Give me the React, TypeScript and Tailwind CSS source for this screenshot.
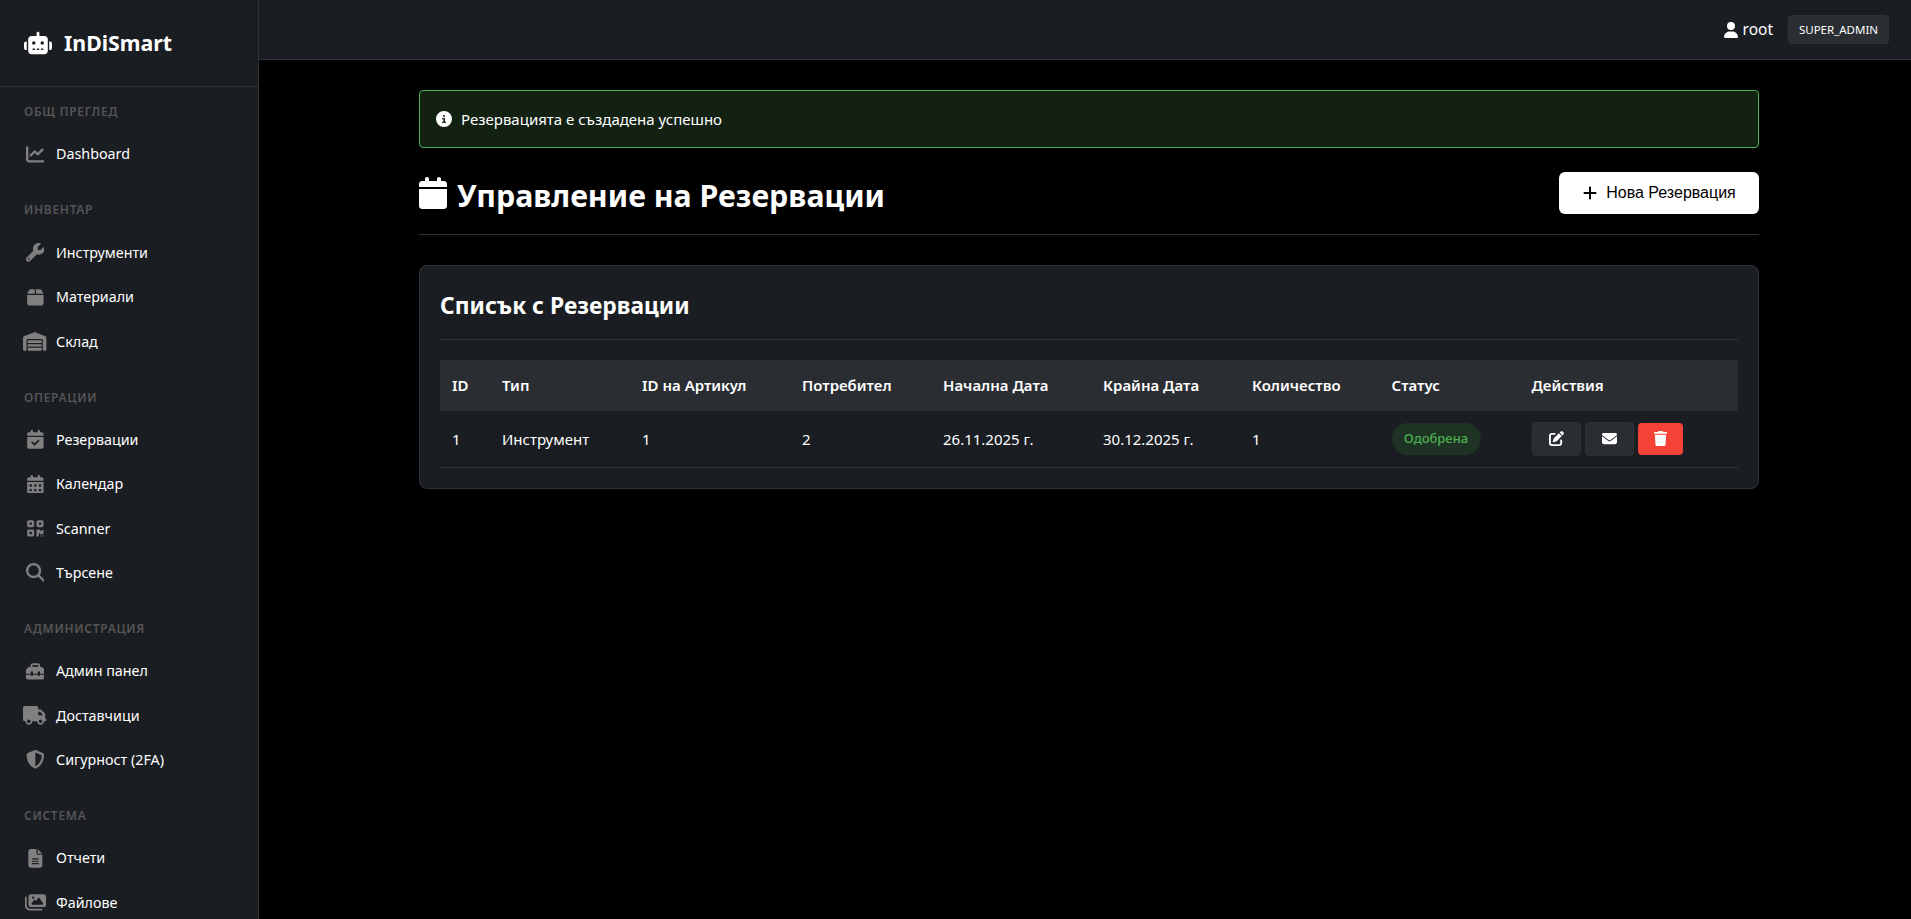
import type { IconType } from 'react-icons'
import {
  FaBox,
  FaCalendar,
  FaCalendarCheck,
  FaCalendarDays,
  FaChartLine,
  FaCircleInfo,
  FaEnvelope,
  FaFileLines,
  FaImages,
  FaMagnifyingGlass,
  FaPenToSquare,
  FaPlus,
  FaQrcode,
  FaRobot,
  FaShieldHalved,
  FaToolbox,
  FaTrash,
  FaTruck,
  FaUser,
  FaWarehouse,
  FaWrench,
} from 'react-icons/fa6'

const font = 'font-["Noto_Sans","Open_Sans",sans-serif]'

type NavItem = { label: string; icon: IconType; width?: string }

const sections: { title: string; items: NavItem[] }[] = [
  { title: 'Общ преглед', items: [{ label: 'Dashboard', icon: FaChartLine }] },
  {
    title: 'Инвентар',
    items: [
      { label: 'Инструменти', icon: FaWrench },
      { label: 'Материали', icon: FaBox },
      // wide glyphs need a wider box, the package draws them in a square
      { label: 'Склад', icon: FaWarehouse, width: 'w-[23.4px]' },
    ],
  },
  {
    title: 'Операции',
    items: [
      { label: 'Резервации', icon: FaCalendarCheck },
      { label: 'Календар', icon: FaCalendarDays },
      { label: 'Scanner', icon: FaQrcode },
      { label: 'Търсене', icon: FaMagnifyingGlass },
    ],
  },
  {
    title: 'Администрация',
    items: [
      { label: 'Админ панел', icon: FaToolbox },
      { label: 'Доставчици', icon: FaTruck, width: 'w-[23.4px]' },
      { label: 'Сигурност (2FA)', icon: FaShieldHalved },
    ],
  },
  {
    title: 'Система',
    items: [
      { label: 'Отчети', icon: FaFileLines },
      { label: 'Файлове', icon: FaImages, width: 'w-[21px]' },
    ],
  },
]

const columns = [
  { label: 'ID', width: 'w-[50px]' },
  { label: 'Тип', width: 'w-[140px]' },
  { label: 'ID на Артикул', width: 'w-[160px]' },
  { label: 'Потребител', width: 'w-[141px]' },
  { label: 'Начална Дата', width: 'w-[160px]' },
  { label: 'Крайна Дата', width: 'w-[149px]' },
  { label: 'Количество', width: 'w-[139.5px]' },
  { label: 'Статус', width: 'w-[140px]' },
  { label: 'Действия', width: 'w-[218.5px]' },
]

function Sidebar() {
  return (
    <aside className="flex h-full w-[259px] shrink-0 flex-col overflow-hidden border-r border-[#2f3237] bg-[#1a1d21]">
      <div className="flex h-[87px] shrink-0 items-center gap-3 border-b border-[#2f3237] px-6">
        <FaRobot className="text-[28px] text-white" />
        <span className="text-[21.3px] font-bold leading-none text-white">InDiSmart</span>
      </div>
      <nav className="flex flex-col gap-[26.2px] pt-[17px]">
        {sections.map((section) => (
          <div key={section.title}>
            <div className="mb-3 px-6 text-[12px] font-semibold uppercase leading-4 tracking-[0.7px] text-[#555]">
              {section.title}
            </div>
            {section.items.map((item) => (
              <div key={item.label} className="flex h-[44.3px] items-center px-6">
                <span className="mr-[10px] flex w-[22px] justify-center text-[#808080]">
                  <item.icon className={`h-[18.7px] shrink-0 ${item.width ?? 'w-[18.7px]'}`} />
                </span>
                <span className="text-[14.3px] text-white">{item.label}</span>
              </div>
            ))}
          </div>
        ))}
      </nav>
    </aside>
  )
}

function Header() {
  return (
    <header className="flex h-[60px] shrink-0 items-center justify-end border-b border-[#2f3237] bg-[#1a1d21] pr-[22px]">
      <FaUser className="mr-1 text-[16px] text-white" />
      <span className="mr-[15px] text-[15.5px] text-white">root</span>
      <span className="flex h-[29px] w-[101px] items-center justify-center rounded border border-[#2f3237] bg-[#2a2d32] text-[11.5px] text-white">
        SUPER_ADMIN
      </span>
    </header>
  )
}

function ReservationsTable() {
  return (
    <table className="w-full table-fixed border-collapse text-left text-[15px] text-white">
      <thead>
        <tr className="h-[51px] bg-[#2a2d32]">
          {columns.map((col) => (
            <th key={col.label} className={`${col.width} px-3 font-semibold`}>
              {col.label}
            </th>
          ))}
        </tr>
      </thead>
      <tbody>
        <tr className="h-[56px] border-b border-[#2f3237]">
          <td className="px-3">1</td>
          <td className="px-3">Инструмент</td>
          <td className="px-3">1</td>
          <td className="px-3">2</td>
          <td className="px-3">26.11.2025 г.</td>
          <td className="px-3">30.12.2025 г.</td>
          <td className="px-3">1</td>
          <td className="px-3">
            <span className="inline-flex h-8 w-[89px] items-center justify-center rounded-2xl bg-[#1e3323] text-[13px] font-medium text-[#4caf50]">
              Одобрена
            </span>
          </td>
          <td className="px-3">
            <div className="flex items-center gap-1">
              <button className="flex h-[34px] w-[49px] items-center justify-center rounded border border-[#2f3237] bg-[#2a2d32] text-[15px]">
                <FaPenToSquare />
              </button>
              <button className="flex h-[34px] w-[49px] items-center justify-center rounded border border-[#2f3237] bg-[#2a2d32] text-[15px]">
                <FaEnvelope />
              </button>
              <button className="flex h-8 w-[45px] items-center justify-center rounded bg-[#f44336] text-[15px]">
                <FaTrash />
              </button>
            </div>
          </td>
        </tr>
      </tbody>
    </table>
  )
}

export default function App() {
  return (
    <div className={`flex h-screen overflow-hidden bg-black ${font}`}>
      <Sidebar />
      <div className="flex min-w-0 flex-1 flex-col">
        <Header />
        <main className="ml-[160px] flex w-[1340px] flex-col pt-[30px]">
          {/* Alert */}
          <div className="flex h-[58px] items-center gap-[9px] rounded border border-[#4caf50] bg-[#132113] px-4 text-[15px] text-white">
            <FaCircleInfo className="text-[16px]" />
            Резервацията е създадена успешно
          </div>

          {/* Title */}
          <div className="mt-6 flex h-[63px] items-start justify-between border-b border-[#2f3237] pb-5">
            <h1 className="flex items-center gap-[10px] text-[30.3px] font-bold leading-[48px] text-white">
              <FaCalendar className="mb-[6px] h-8 w-7 shrink-0" />
              Управление на Резервации
            </h1>
            <button className='flex h-[42px] w-[200px] items-center justify-center gap-[8px] rounded-md bg-white font-["Liberation_Sans",sans-serif] text-[16px] text-black'>
              <FaPlus className="text-[16px]" />
              Нова Резервация
            </button>
          </div>

          {/* Card */}
          <section className="mt-[30px] rounded-lg border border-[#2f3237] bg-[#1a1d21] px-5 pb-5">
            <h2 className="flex h-[74px] items-center border-b border-[#2f3237] pt-2 text-[22.8px] font-bold text-white">
              Списък с Резервации
            </h2>
            <div className="mt-5">
              <ReservationsTable />
            </div>
          </section>
        </main>
      </div>
    </div>
  )
}
